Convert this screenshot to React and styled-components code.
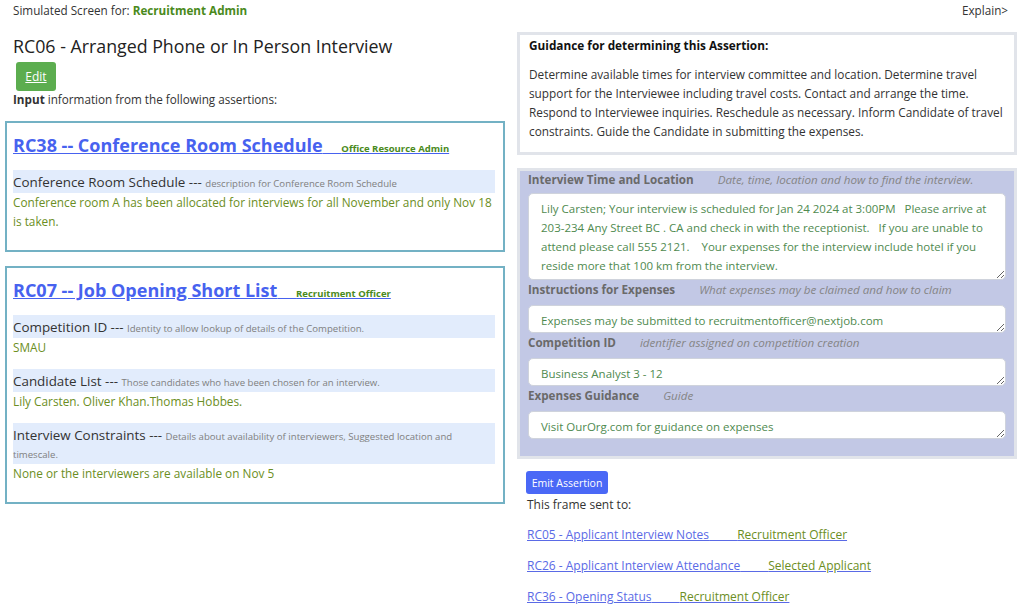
import React from "react";
import styled, { createGlobalStyle } from "styled-components";

const GlobalStyle = createGlobalStyle`
  html, body {
    margin: 0;
    padding: 0;
    background: #ffffff;
    font-family: "Open Sans", "Noto Sans", sans-serif;
    color: #333333;
  }
`;

const Page = styled.div`
  width: 1024px;
  height: 612px;
  overflow: hidden;
  display: flex;
  flex-direction: column;
`;

const TopBar = styled.div`
  display: flex;
  justify-content: space-between;
  padding: 1px 16px 0 13px;
  font-size: 11.7px;
  line-height: 18px;
  color: #333;
`;

const RoleStrong = styled.b`
  color: #4a8a1c;
`;

const Columns = styled.div`
  display: grid;
  grid-template-columns: 500px 500px;
  column-gap: 12px;
  padding-left: 5px;
`;

const LeftCol = styled.div`
  display: flex;
  flex-direction: column;
`;

const Title = styled.h1`
  margin: 14px 0 0 8px;
  font-size: 17.8px;
  font-weight: 400;
  line-height: 26px;
  color: #222;
`;

const EditButton = styled.button`
  margin: 3px 0 0 11px;
  width: 40px;
  height: 29px;
  border: none;
  border-radius: 3px;
  background: #5cad4f;
  color: #fff;
  font-family: inherit;
  font-size: 12px;
  text-decoration: underline;
  padding: 0;
  align-self: flex-start;
`;

const InputNote = styled.div`
  margin-left: 8px;
  font-size: 11.7px;
  line-height: 17px;
`;

const Card = styled.div`
  border: 2px solid #73b1c4;
  margin-top: ${({ $top }) => $top}px;
  padding: 9px 8px 0 6px;
  height: ${({ $h }) => $h}px;
  box-sizing: border-box;
`;

const CardTitle = styled.div`
  line-height: 26px;
  margin-bottom: 11px;
`;

const CardHeading = styled.a`
  font-size: 18px;
  font-weight: 700;
  color: #4762ef;
  text-decoration: underline;
`;

const CardRole = styled.span`
  font-size: 9.5px;
  line-height: 12px;
  color: #4a8a1c;
`;

const Field = styled.div`
  margin-bottom: 12px;
`;

const FieldHead = styled.div`
  background: #e2ecfc;
  font-size: 13.4px;
  line-height: 18px;
  padding: 2.5px 0;
  color: #333;
`;

const FieldDesc = styled.span`
  font-size: 9.6px;
  line-height: 12px;
  color: #808080;
`;

const FieldValue = styled.div`
  font-size: 11.8px;
  line-height: 19px;
  color: #6b8e23;
`;

const RightCol = styled.div`
  display: flex;
  flex-direction: column;
  padding-top: 13px;
`;

const GuidanceBox = styled.div`
  border: 3px solid #e1e4ea;
  padding: 1px 9px 8px 9px;
  height: 123px;
  box-sizing: border-box;
`;

const GuidanceTitle = styled.div`
  font-size: 11.8px;
  font-weight: 700;
  line-height: 18px;
  color: #111;
  margin-bottom: 11px;
`;

const GuidanceText = styled.div`
  font-size: 11.8px;
  line-height: 19px;
  color: #333;
`;

const FormPanel = styled.div`
  margin-top: 13px;
  border: 3px solid #e1e4ea;
  background: #c2c8e5;
  padding: 0 8px 0 8px;
  height: 291px;
  box-sizing: border-box;
`;

const Label = styled.div`
  display: flex;
  gap: 24px;
  font-size: 11.65px;
  line-height: 18px;
  margin-top: ${({ $first }) => ($first ? 0 : 1)}px;
  margin-bottom: ${({ $first }) => ($first ? 4 : 6)}px;
`;

const LabelName = styled.b`
  color: #6a6a6a;
`;

const LabelHint = styled.i`
  color: #858585;
`;

const Area = styled.textarea`
  display: block;
  width: 100%;
  box-sizing: border-box;
  height: ${({ $h }) => $h}px;
  border: 1px solid #cfd3dc;
  border-radius: 5px;
  background: #fff;
  padding: 5px 8px 5px 12px;
  font-family: inherit;
  font-size: 11.5px;
  line-height: 19px;
  color: #4f8a4f;
  resize: vertical;
  overflow: hidden;
  outline: none;
`;

const EmitButton = styled.button`
  margin: 12px 0 0 9px;
  align-self: flex-start;
  width: 82px;
  height: 23px;
  border: none;
  border-radius: 3px;
  background: #4a68f6;
  color: #fff;
  font-family: inherit;
  font-size: 10.5px;
  padding: 0;
`;

const SentNote = styled.div`
  margin: 1px 0 5px 10px;
  font-size: 12px;
  line-height: 19px;
  color: #333;
`;

const SentLink = styled.a`
  margin-left: 10px;
  font-size: 12px;
  line-height: 31px;
  color: #5a6ae6;
  text-decoration: underline;
  align-self: flex-start;
`;

const SentRole = styled.span`
  color: #6b8e23;
`;

const gap = (n) => "\u00a0".repeat(n);

const assertions = [
  {
    code: "RC38 -- Conference Room Schedule",
    role: "Office Resource Admin",
    top: 13,
    h: 131,
    fields: [
      {
        name: "Conference Room Schedule",
        desc: "description for Conference Room Schedule",
        value:
          "Conference room A has been allocated for interviews for all November and only Nov 18 is taken.",
      },
    ],
  },
  {
    code: "RC07 -- Job Opening Short List",
    role: "Recruitment Officer",
    top: 14,
    h: 238,
    fields: [
      {
        name: "Competition ID",
        desc: "Identity to allow lookup of details of the Competition.",
        value: "SMAU",
      },
      {
        name: "Candidate List",
        desc: "Those candidates who have been chosen for an interview.",
        value: "Lily Carsten. Oliver Khan.Thomas Hobbes.",
      },
      {
        name: "Interview Constraints",
        desc: "Details about availability of interviewers, Suggested location and timescale.",
        value: "None or the interviewers are available on Nov 5",
      },
    ],
  },
];

const formFields = [
  {
    name: "Interview Time and Location",
    hint: "Date, time, location and how to find the interview.",
    value:
      "Lily Carsten; Your interview is scheduled for Jan 24 2024 at 3:00PM   Please arrive at 203-234 Any Street BC . CA and check in with the receptionist.   If you are unable to attend please call 555 2121.    Your expenses for the interview include hotel if you reside more that 100 km from the interview.",
    h: 87,
  },
  {
    name: "Instructions for Expenses",
    hint: "What expenses may be claimed and how to claim",
    value: "Expenses may be submitted to recruitmentofficer@nextjob.com",
    h: 28,
  },
  {
    name: "Competition ID",
    hint: "identifier assigned on competition creation",
    value: "Business Analyst 3 - 12",
    h: 28,
  },
  {
    name: "Expenses Guidance",
    hint: "Guide",
    value: "Visit OurOrg.com for guidance on expenses",
    h: 28,
  },
];

const sentTo = [
  { code: "RC05 - Applicant Interview Notes", role: "Recruitment Officer" },
  { code: "RC26 - Applicant Interview Attendance", role: "Selected Applicant" },
  { code: "RC36 - Opening Status", role: "Recruitment Officer" },
];

export default function App() {
  return (
    <Page>
      <GlobalStyle />
      <TopBar>
        <span>
          Simulated Screen for: <RoleStrong>Recruitment Admin</RoleStrong>
        </span>
        <span>Explain&gt;</span>
      </TopBar>
      <Columns>
        <LeftCol>
          <Title>RC06 - Arranged Phone or In Person Interview</Title>
          <EditButton>Edit</EditButton>
          <InputNote>
            <b>Input</b> information from the following assertions:
          </InputNote>
          {assertions.map((a) => (
            <Card key={a.code} $top={a.top} $h={a.h}>
              <CardTitle>
                <CardHeading href="#">
                  {a.code}
                  {gap(4)}
                  <CardRole>{a.role}</CardRole>
                </CardHeading>
              </CardTitle>
              {a.fields.map((f) => (
                <Field key={f.name}>
                  <FieldHead>
                    {f.name} --- <FieldDesc>{f.desc}</FieldDesc>
                  </FieldHead>
                  <FieldValue>{f.value}</FieldValue>
                </Field>
              ))}
            </Card>
          ))}
        </LeftCol>
        <RightCol>
          <GuidanceBox>
            <GuidanceTitle>Guidance for determining this Assertion:</GuidanceTitle>
            <GuidanceText>
              Determine available times for interview committee and location.
              Determine travel support for the Interviewee including travel
              costs. Contact and arrange the time. Respond to Interviewee
              inquiries. Reschedule as necessary. Inform Candidate of travel
              constraints. Guide the Candidate in submitting the expenses.
            </GuidanceText>
          </GuidanceBox>
          <FormPanel>
            {formFields.map((f, i) => (
              <React.Fragment key={f.name}>
                <Label $first={i === 0}>
                  <LabelName>{f.name}</LabelName>
                  <LabelHint>{f.hint}</LabelHint>
                </Label>
                <Area readOnly $h={f.h} defaultValue={f.value} />
              </React.Fragment>
            ))}
          </FormPanel>
          <EmitButton>Emit Assertion</EmitButton>
          <SentNote>This frame sent to:</SentNote>
          {sentTo.map((s) => (
            <SentLink key={s.code} href="#">
              {s.code}
              {gap(9)}
              <SentRole>{s.role}</SentRole>
            </SentLink>
          ))}
        </RightCol>
      </Columns>
    </Page>
  );
}
